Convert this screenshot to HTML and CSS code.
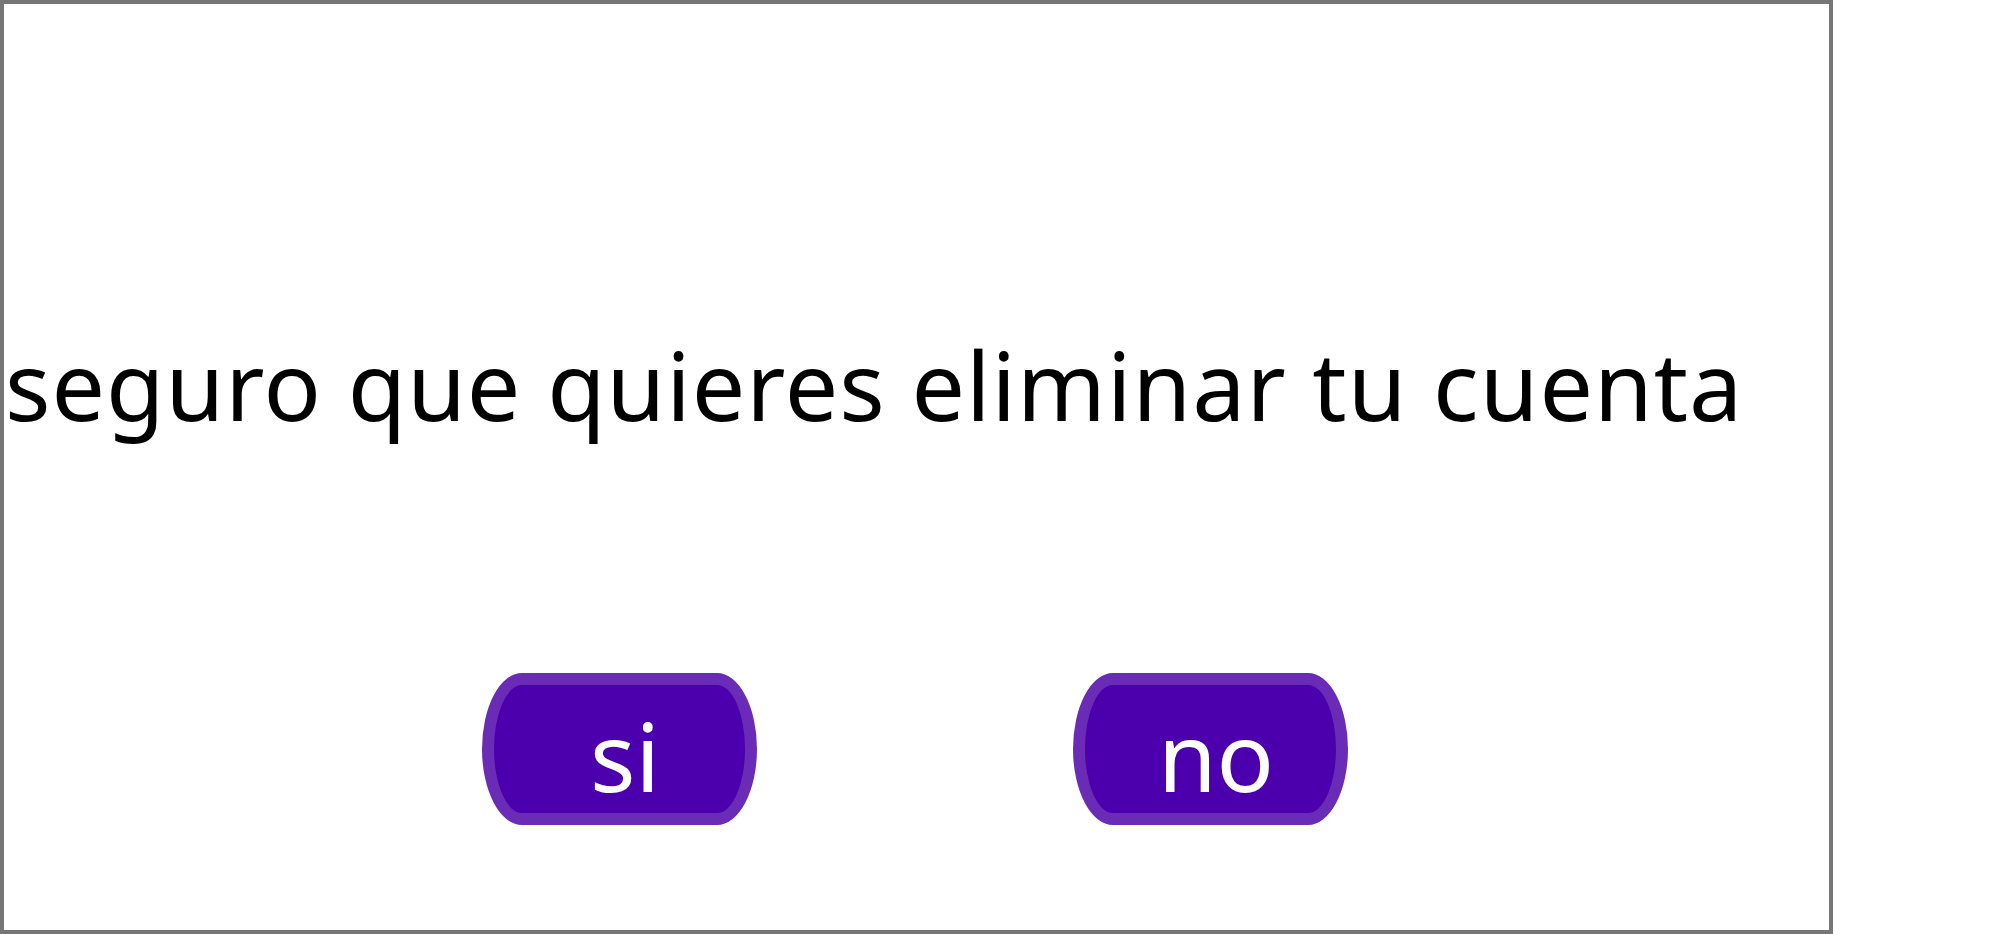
FILE: index.html
```html
<!DOCTYPE html>
<html lang="es">
<head>
<meta charset="utf-8">
<title>Eliminar cuenta</title>
<link rel="stylesheet" href="styles.css">
</head>
<body>
<div class="frame">
  <p class="question">seguro que quieres eliminar tu cuenta</p>
  <div class="actions">
    <button class="pill">si</button>
    <button class="pill">no</button>
  </div>
</div>
</body>
</html>
```
FILE: styles.css
```css
html, body {
  margin: 0;
  padding: 0;
  background: #ffffff;
}
.frame {
  box-sizing: border-box;
  width: 1833px;
  height: 934px;
  border: 4px solid #767676;
  display: flex;
  flex-direction: column;
  padding-top: 333px;
  font-family: "Noto Sans", "Open Sans", sans-serif;
}
.question {
  margin: 0;
  padding-left: 1px;
  font-size: 95px;
  letter-spacing: 1px;
  line-height: 1;
  color: #000;
  white-space: nowrap;
}
.actions {
  margin-top: 241px;
  display: flex;
  justify-content: center;
  gap: 316px;
  padding-right: 4px;
}
.pill {
  box-sizing: border-box;
  width: 275px;
  height: 152px;
  border: 12px solid #6a2cb6;
  background: #4c00ad;
  border-radius: 40px / 50%;
  color: #fff;
  font-family: inherit;
  font-size: 95px;
  line-height: 1;
  padding: 12px 0 0 12px;
  display: flex;
  align-items: center;
  justify-content: center;
}
```
